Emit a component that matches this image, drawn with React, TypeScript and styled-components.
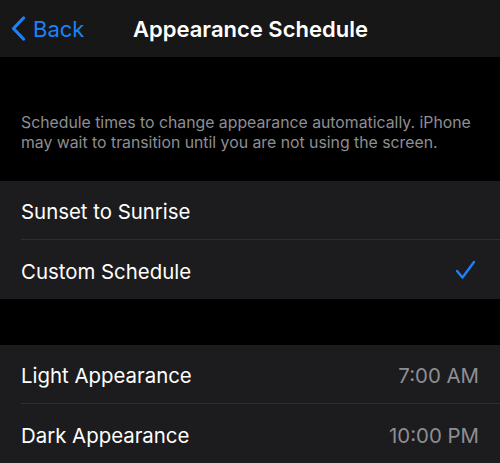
import React from 'react'
import styled, { createGlobalStyle } from 'styled-components'

const GlobalStyle = createGlobalStyle`
  html, body {
    margin: 0;
    padding: 0;
    background: #000000;
    font-family: Inter, 'Noto Sans', sans-serif;
    -webkit-font-smoothing: antialiased;
  }
`

const Screen = styled.div`
  width: 500px;
  height: 463px;
  overflow: hidden;
  background: #000000;
  display: flex;
  flex-direction: column;
`

const NavBar = styled.div`
  height: 57px;
  flex-shrink: 0;
  background: #171717;
  position: relative;
  display: flex;
  align-items: center;
  justify-content: center;
`

const BackButton = styled.button`
  position: absolute;
  left: 11px;
  top: 0;
  bottom: 0;
  display: flex;
  align-items: center;
  gap: 7px;
  padding: 0;
  border: 0;
  background: none;
  color: #1a82fb;
  font-family: inherit;
  font-size: 22px;
  cursor: pointer;
`

const Title = styled.div`
  color: #ffffff;
  font-size: 22px;
  font-weight: 600;
  margin-left: 1px;
`

const Footer = styled.p`
  margin: 0;
  padding: 56px 21px 28px;
  color: #8e8e93;
  font-size: 15.8px;
  line-height: 20px;
`

const Group = styled.div`
  background: #1c1c1e;
  flex-shrink: 0;
`

const Spacer = styled.div`
  height: 46px;
  flex-shrink: 0;
`

const Row = styled.div<{ last?: boolean }>`
  height: 59px;
  margin-left: 21px;
  padding: 3px 21px 0 0;
  display: flex;
  align-items: center;
  justify-content: space-between;
  box-sizing: border-box;
  border-bottom: ${(p) => (p.last ? 'none' : '1px solid #2e2e30')};
`

const Label = styled.span`
  color: #ffffff;
  font-size: 20.4px;
`

const Value = styled.span`
  color: #8e8e93;
  font-size: 20.4px;
`

const CheckMark = styled.svg`
  margin: -3px 3px 0 0;
`

const Chevron = () => (
  <svg width='15' height='25' viewBox='0 0 15 25'>
    <path d='M12.5 2 L2.5 12.5 L12.5 23' fill='none' stroke='#1a82fb' strokeWidth='3.2' strokeLinecap='round' strokeLinejoin='round' />
  </svg>
)

const Check = () => (
  <CheckMark width='21' height='20' viewBox='0 0 21 20'>
    <path d='M2 11 L7.5 17.5 L19 2' fill='none' stroke='#1a82fb' strokeWidth='2.4' strokeLinecap='round' strokeLinejoin='round' />
  </CheckMark>
)

const modes = [
  { label: 'Sunset to Sunrise', selected: false },
  { label: 'Custom Schedule', selected: true },
]

const times = [
  { label: 'Light Appearance', value: '7:00 AM' },
  { label: 'Dark Appearance', value: '10:00 PM' },
]

export default function App() {
  return (
    <Screen>
      <GlobalStyle />
      <NavBar>
        <BackButton>
          <Chevron />
          Back
        </BackButton>
        <Title>Appearance Schedule</Title>
      </NavBar>
      <Footer>
        Schedule times to change appearance automatically. iPhone may wait to transition until you are not using the screen.
      </Footer>
      <Group>
        {modes.map((m, i) => (
          <Row key={m.label} last={i === modes.length - 1}>
            <Label>{m.label}</Label>
            {m.selected && <Check />}
          </Row>
        ))}
      </Group>
      <Spacer />
      <Group>
        {times.map((t, i) => (
          <Row key={t.label} last={i === times.length - 1}>
            <Label>{t.label}</Label>
            <Value>{t.value}</Value>
          </Row>
        ))}
      </Group>
    </Screen>
  )
}
